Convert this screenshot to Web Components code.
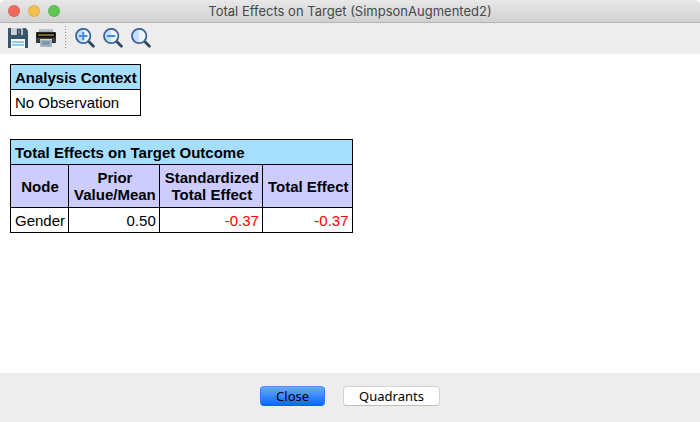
<!DOCTYPE html>
<html lang="en">
<head>
<meta charset="utf-8">
<title>Total Effects on Target (SimpsonAugmented2)</title>
<style>
  html, body {
    height: 100%;
  }

  body {
    margin: 0;
    background: #fff;
    color: #000;
    font-family: "Liberation Sans", Arial, sans-serif;
  }
</style>
</head>
<body>
<report-window heading="Total Effects on Target (SimpsonAugmented2)">
  <tool-bar slot="toolbar">
    <tool-button icon="save" label="Save"></tool-button>
    <tool-button icon="print" label="Print"></tool-button>
    <tool-separator></tool-separator>
    <tool-button icon="zoom-in" label="Zoom in"></tool-button>
    <tool-button icon="zoom-out" label="Zoom out"></tool-button>
    <tool-button icon="zoom-reset" label="Default zoom"></tool-button>
  </tool-bar>

  <context-table heading="Analysis Context" value="No Observation"></context-table>
  <effects-table heading="Total Effects on Target Outcome"></effects-table>

  <push-button slot="actions" primary>Close</push-button>
  <push-button slot="actions">Quadrants</push-button>
</report-window>

<script>
;(() => {
  const lens = (id, inner) => `<svg viewBox="0 0 20 20" aria-hidden="true" focusable="false">
    <defs>
      <linearGradient id="${id}" x1="0" x2="1" y1="0" y2="0">
        <stop offset="0" stop-color="#b5d8fc"/>
        <stop offset=".5" stop-color="#c9e2fe"/>
        <stop offset=".5" stop-color="#e9f4ff"/>
        <stop offset="1" stop-color="#f4f9ff"/>
      </linearGradient>
    </defs>
    <path d="M14 13.800l4.400 4.400" stroke="#2e4a63" stroke-width="2.800" stroke-linecap="round"/>
    <circle cx="8.200" cy="8" r="7.200" fill="url(#${id})" stroke="#3d6391" stroke-width="1.800"/>
    ${inner}
  </svg>`

  const ICONS = {
    save: `<svg viewBox="0 0 20 20" aria-hidden="true" focusable="false">
      <path d="M0 0h17.500L20 2.500V20H0z" fill="#385568"/>
      <rect x="3" y="0" width="12" height="7" fill="#b4c0cb"/>
      <rect x="3" y="0" width="5" height="7" fill="#c6d0d9"/>
      <rect x="9" y="1" width="4" height="6" fill="#33475a"/>
      <rect x="10" y="2" width="2" height="4" fill="#61758a"/>
      <rect x="3" y="11" width="14" height="9" fill="#f5fbff"/>
      <rect x="4" y="13" width="12" height="2" fill="#8dcdee"/>
      <rect x="4" y="16" width="12" height="2" fill="#8dcdee"/>
    </svg>`,
    print: `<svg viewBox="0 0 20 20" aria-hidden="true" focusable="false">
      <rect x="3" y="1" width="14" height="5" fill="#a7b0b8"/>
      <rect x="4" y="1" width="12" height="2" fill="#bcc4ca"/>
      <rect x="0" y="4" width="20" height="11" rx="1" fill="#252628"/>
      <rect x="1" y="5" width="18" height="4" fill="#090909"/>
      <rect x="2" y="6" width="16" height="2" fill="#826426"/>
      <rect x="0" y="10" width="20" height="4" fill="#3c3e40"/>
      <path d="M4 11h12v8H5l-1-.500z" fill="#a5b4bf"/>
      <rect x="6" y="13" width="8" height="4" fill="#8498a7"/>
      <path d="M4 11h12v1H4z" fill="#d2d9de"/>
    </svg>`,
    'zoom-in': lens('g', '<path d="M4 8h8.400M8.200 3.800v8.400" stroke="#428be6" stroke-width="2"/>'),
    'zoom-out': lens('g', '<path d="M4 8h8.400" stroke="#428be6" stroke-width="2"/>'),
    'zoom-reset': lens('g', ''),
  }

  const TABLE_STYLE = `
    :host {
      display: block;
      font-size: 15px;
      line-height: 17px;
    }

    table {
      border-collapse: collapse;
      background: #fff;
    }

    th,
    td {
      border: 1px solid #000;
      padding: 4px 3px 3px 4px;
      white-space: nowrap;
    }

    .title {
      background: #a5deff;
      text-align: left;
    }
  `

  class ReportWindow extends HTMLElement {
    constructor() {
      super()
      this.attachShadow({ mode: 'open' })
      this.shadowRoot.innerHTML = `
        <style>
          :host {
            display: flex;
            flex-direction: column;
            min-height: 100%;
            background: #fff;
          }

          header {
            display: grid;
            grid-template-columns: 1fr auto 1fr;
            align-items: center;
            height: 22px;
            border-bottom: 1px solid #b4b4b4;
            border-radius: 5px 5px 0 0;
            background: linear-gradient(#e8e8e8, #d1d1d1);
          }

          .lights {
            display: flex;
            gap: 8px;
            padding-left: 8px;
          }

          .lights button {
            width: 12px;
            height: 12px;
            padding: 0;
            border: 1px solid rgba(0, 0, 0, 0.08);
            border-radius: 50%;
          }

          .close { background: #ee6a5f; }
          .minimize { background: #f5bf4f; }
          .zoom { background: #61c655; }

          h1 {
            margin: 0;
            color: #484848;
            font: 400 13px/22px Inter, sans-serif;
          }

          main {
            display: flex;
            flex: 1;
            flex-direction: column;
            gap: 23px;
            padding: 10px;
          }

          footer {
            display: flex;
            justify-content: center;
            gap: 18px;
            padding: 13px 0 16px;
            background: #ededed;
          }
        </style>
        <header>
          <div class="lights">
            <button class="close" type="button" aria-label="Close window"></button>
            <button class="minimize" type="button" aria-label="Minimize window"></button>
            <button class="zoom" type="button" aria-label="Zoom window"></button>
          </div>
          <h1></h1>
        </header>
        <slot name="toolbar"></slot>
        <main><slot></slot></main>
        <footer><slot name="actions"></slot></footer>
      `
    }

    connectedCallback() {
      this.shadowRoot.querySelector('h1').textContent = this.getAttribute('heading')
    }
  }

  class ToolBar extends HTMLElement {
    constructor() {
      super()
      this.attachShadow({ mode: 'open' })
      this.shadowRoot.innerHTML = `
        <style>
          :host {
            display: flex;
            align-items: center;
            gap: 8px;
            padding: 5px 8px 6px;
            background: #ededed;
          }
        </style>
        <slot></slot>
      `
    }
  }

  class ToolSeparator extends HTMLElement {
    constructor() {
      super()
      this.attachShadow({ mode: 'open' })
      this.shadowRoot.innerHTML = `
        <style>
          :host {
            align-self: stretch;
            width: 1px;
            margin: -2px 1px;
            background: repeating-linear-gradient(#8c8c8c 0 1px, transparent 1px 3px);
          }
        </style>
      `
    }
  }

  class ToolButton extends HTMLElement {
    constructor() {
      super()
      this.attachShadow({ mode: 'open' })
      this.shadowRoot.innerHTML = `
        <style>
          :host {
            display: block;
          }

          button {
            display: block;
            padding: 0;
            border: none;
            background: none;
          }

          svg {
            display: block;
            width: 20px;
            height: 20px;
          }
        </style>
        <button type="button"></button>
      `
    }

    connectedCallback() {
      const btn = this.shadowRoot.querySelector('button')
      btn.innerHTML = ICONS[this.getAttribute('icon')]
      btn.setAttribute('aria-label', this.getAttribute('label'))
    }
  }

  class PushButton extends HTMLElement {
    constructor() {
      super()
      this.attachShadow({ mode: 'open' })
      this.shadowRoot.innerHTML = `
        <style>
          :host {
            display: block;
          }

          button {
            display: block;
            height: 20px;
            padding: 0 15px;
            border: 1px solid #d2d2d2;
            border-bottom-color: #bdbdbd;
            border-radius: 4px;
            background: #fff;
            color: #000;
            font: 400 13px/18px "Noto Sans", sans-serif;
          }

          :host([primary]) button {
            border-color: #4d94f8 #2c7df5 #0a62ee;
            background: linear-gradient(#6aaafc, #0a69fe);
          }
        </style>
        <button type="button"><slot></slot></button>
      `
    }
  }

  class ContextTable extends HTMLElement {
    constructor() {
      super()
      this.attachShadow({ mode: 'open' })
      this.shadowRoot.innerHTML = `
        <style>
          ${TABLE_STYLE}

          td {
            padding-bottom: 4px;
          }
        </style>
        <table>
          <thead><tr><th class="title" scope="col"></th></tr></thead>
          <tbody><tr><td></td></tr></tbody>
        </table>
      `
    }

    connectedCallback() {
      this.shadowRoot.querySelector('th').textContent = this.getAttribute('heading')
      this.shadowRoot.querySelector('td').textContent = this.getAttribute('value')
    }
  }

  class EffectsTable extends HTMLElement {
    constructor() {
      super()
      this.attachShadow({ mode: 'open' })
      this.shadowRoot.innerHTML = `
        <style>
          ${TABLE_STYLE}

          .columns th {
            padding-bottom: 4px;
            background: #ccccff;
          }

          th + th,
          td + td {
            padding-left: 5px;
          }

          td + td {
            text-align: right;
          }

          .negative {
            color: #f00;
          }
        </style>
        <table>
          <thead>
            <tr><th class="title" colspan="4" scope="colgroup"></th></tr>
            <tr class="columns">
              <th scope="col">Node</th>
              <th scope="col">Prior<br>Value/Mean</th>
              <th scope="col">Standardized<br>Total Effect</th>
              <th scope="col">Total Effect</th>
            </tr>
          </thead>
          <tbody>
            <tr>
              <td>Gender</td>
              <td>0.50</td>
              <td class="negative">-0.37</td>
              <td class="negative">-0.37</td>
            </tr>
          </tbody>
        </table>
      `
    }

    connectedCallback() {
      this.shadowRoot.querySelector('.title').textContent = this.getAttribute('heading')
    }
  }

  customElements.define('report-window', ReportWindow)
  customElements.define('tool-bar', ToolBar)
  customElements.define('tool-separator', ToolSeparator)
  customElements.define('tool-button', ToolButton)
  customElements.define('push-button', PushButton)
  customElements.define('context-table', ContextTable)
  customElements.define('effects-table', EffectsTable)
})()
</script>
</body>
</html>
